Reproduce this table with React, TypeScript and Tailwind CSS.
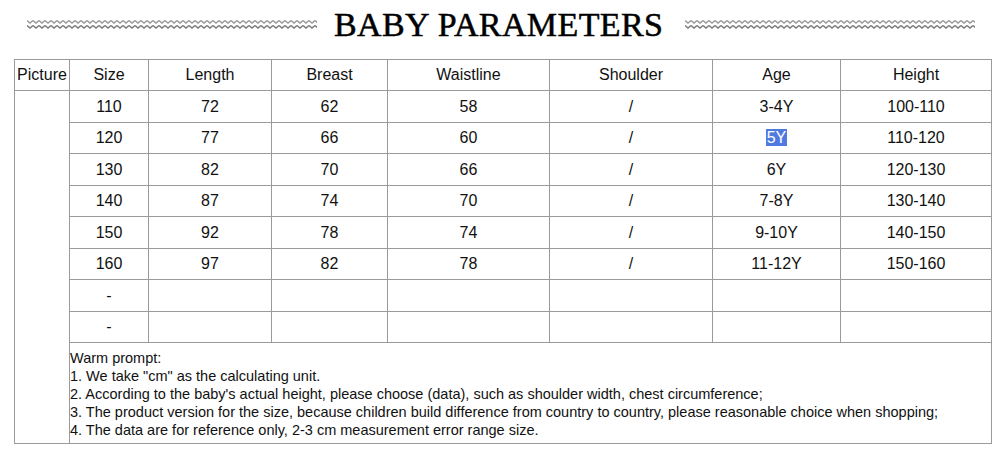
import React from "react";

const rows = [
  ["110", "72", "62", "58", "/", "3-4Y", "100-110"],
  ["120", "77", "66", "60", "/", "5Y", "110-120"],
  ["130", "82", "70", "66", "/", "6Y", "120-130"],
  ["140", "87", "74", "70", "/", "7-8Y", "130-140"],
  ["150", "92", "78", "74", "/", "9-10Y", "140-150"],
  ["160", "97", "82", "78", "/", "11-12Y", "150-160"],
  ["-", "", "", "", "", "", ""],
  ["-", "", "", "", "", "", ""],
];

const headers = ["Picture", "Size", "Length", "Breast", "Waistline", "Shoulder", "Age", "Height"];
const widths = [55, 79, 123, 116, 162, 163, 128, 151];

function Zigzag() {
  return (
    <svg width="290" height="11" viewBox="0 0 290 11">
      <defs>
        <pattern id="zz" width="6" height="11" patternUnits="userSpaceOnUse">
          <path d="M0 1.5 L3 4 L6 1.5" fill="none" stroke="#9a9a9a" strokeWidth="1.4" />
          <path d="M0 6.5 L3 9 L6 6.5" fill="none" stroke="#7d7d7d" strokeWidth="1.6" />
        </pattern>
      </defs>
      <rect width="290" height="11" fill="url(#zz)" />
    </svg>
  );
}

export default function App() {
  return (
    <div className="w-[1000px] h-[453px] bg-white text-[#111]" style={{ fontFamily: '"Liberation Sans", Arial, sans-serif' }}>
      {/* 标题 */}
      <div className="flex items-center h-[48px] pt-[1px]">
        <div className="ml-[27px]">
          <Zigzag />
        </div>
        <h1
          className="ml-[17px] w-[334px] text-[34px] leading-none tracking-[0.4px] text-black [-webkit-text-stroke:0.5px_black]"
          style={{ fontFamily: '"Liberation Serif", "Times New Roman", serif' }}
        >
          BABY PARAMETERS
        </h1>
        <div className="ml-[17px]">
          <Zigzag />
        </div>
      </div>

      {/* 尺码表 */}
      <table className="ml-[14px] mt-[11px] border-collapse border border-[#6f6f6f] table-fixed w-[977px] text-[16px]">
        <colgroup>
          {widths.map((w, i) => (
            <col key={i} style={{ width: w }} />
          ))}
        </colgroup>
        <thead>
          <tr className="h-[31px]">
            {headers.map((h) => (
              <th key={h} className="border border-[#9a9a9a] font-normal text-center p-0">
                {h}
              </th>
            ))}
          </tr>
        </thead>
        <tbody>
          {rows.map((r, i) => (
            <tr key={i} className={i % 2 === 0 ? "h-[32px]" : "h-[31px]"}>
              {i === 0 && <td rowSpan={9} className="border border-[#9a9a9a] p-0" />}
              {r.map((c, j) => (
                <td key={j} className="border border-[#9a9a9a] text-center p-0">
                  {c === "5Y" ? <span className="bg-[#4f7ae0] text-white px-[1px]">5Y</span> : c}
                </td>
              ))}
            </tr>
          ))}
          <tr className="h-[101px]">
            <td colSpan={7} className="border border-[#9a9a9a] align-top pt-[6px] pl-0 text-[14.5px] leading-[18px]">
              <p>Warm prompt:</p>
              <p>1. We take "cm" as the calculating unit.</p>
              <p>2. According to the baby's actual height, please choose (data), such as shoulder width, chest circumference;</p>
              <p>3. The product version for the size, because children build difference from country to country, please reasonable choice when shopping;</p>
              <p>4. The data are for reference only, 2-3 cm measurement error range size.</p>
            </td>
          </tr>
        </tbody>
      </table>
    </div>
  );
}
